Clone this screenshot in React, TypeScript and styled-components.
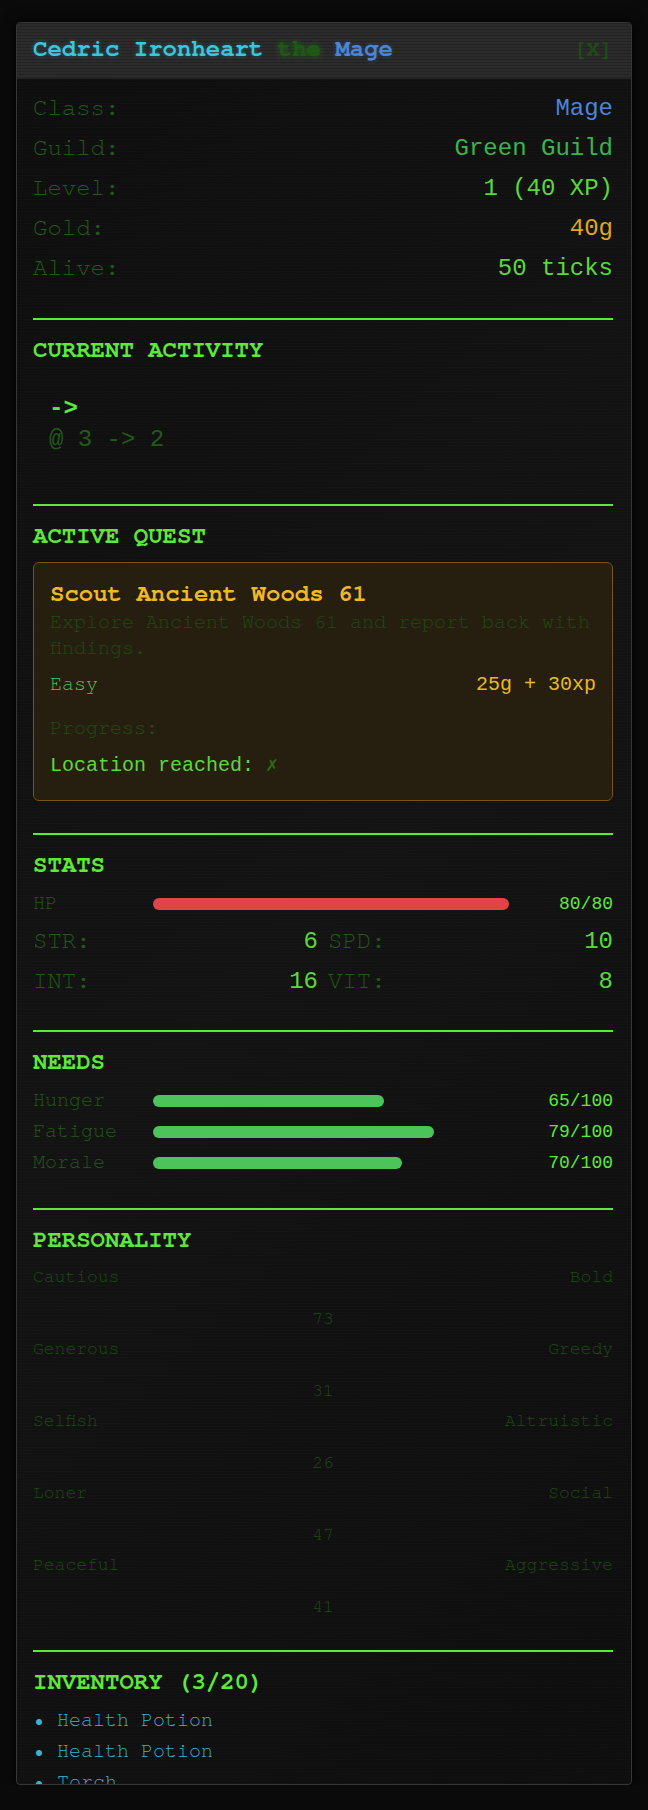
import React from 'react';
import styled, { createGlobalStyle } from 'styled-components';

const SLAB =
  "'Courier 10 Pitch', 'Nimbus Mono PS', 'Nimbus Mono', 'TeX Gyre Cursor', 'FreeMono', 'Courier', 'Courier New', 'Liberation Mono', monospace";
const SANS = "'Liberation Mono', 'DejaVu Sans Mono', monospace";

const C = {
  bright: '#5ee83c',
  value: '#5ad83a',
  green: '#3cb44a',
  dim: '#235a18',
  dimmer: '#1d4a15',
  cyan: '#3cc6de',
  blue: '#4a86d8',
  gold: '#e0a81c',
  red: '#e04545',
  need: '#4cc45a',
};

const GlobalStyle = createGlobalStyle`
  html, body {
    margin: 0;
    padding: 0;
    background: #0a0a0a;
  }
  body {
    font-family: ${SLAB};
  }
`;

const info = [
  { label: 'Class:', value: 'Mage', color: C.blue },
  { label: 'Guild:', value: 'Green Guild', color: C.green },
  { label: 'Level:', value: '1 (40 XP)', color: C.value },
  { label: 'Gold:', value: '40g', color: C.gold },
  { label: 'Alive:', value: '50 ticks', color: C.value },
];

const needs = [
  { label: 'Hunger', value: 65 },
  { label: 'Fatigue', value: 79 },
  { label: 'Morale', value: 70 },
];

const traits = [
  { low: 'Cautious', high: 'Bold', value: 73 },
  { low: 'Generous', high: 'Greedy', value: 31 },
  { low: 'Selfish', high: 'Altruistic', value: 26 },
  { low: 'Loner', high: 'Social', value: 47 },
  { low: 'Peaceful', high: 'Aggressive', value: 41 },
];

const inventory = ['Health Potion', 'Health Potion', 'Torch'];

export default function App() {
  return (
    <>
      <GlobalStyle />
      <Page>
        <Panel>
          <Header>
            <Name>
              <Hero>Cedric Ironheart</Hero> <The>the</The> <ClassName>Mage</ClassName>
            </Name>
            <Close>[X]</Close>
          </Header>
          <Body>
            <InfoList>
              {info.map((row) => (
                <InfoRow key={row.label}>
                  <Label>{row.label}</Label>
                  <Value $color={row.color}>{row.value}</Value>
                </InfoRow>
              ))}
            </InfoList>

            <Section $gap={30}>
              <SectionTitle>CURRENT ACTIVITY</SectionTitle>
              <ActivityBox>
                <Arrow>-&gt;</Arrow>
                <Location>@ 3 -&gt; 2</Location>
              </ActivityBox>
            </Section>

            <Section $gap={38}>
              <SectionTitle $after={13}>ACTIVE QUEST</SectionTitle>
              <QuestCard>
                <QuestTitle>Scout Ancient Woods 61</QuestTitle>
                <QuestDesc>Explore Ancient Woods 61 and report back with findings.</QuestDesc>
                <QuestMeta>
                  <Difficulty>Easy</Difficulty>
                  <Reward>25g + 30xp</Reward>
                </QuestMeta>
                <Progress>Progress:</Progress>
                <Objective>
                  Location reached: <Cross>✗</Cross>
                </Objective>
              </QuestCard>
            </Section>

            <Section $gap={32}>
              <SectionTitle $after={12}>STATS</SectionTitle>
              <BarRow>
                <BarLabel>HP</BarLabel>
                <Track>
                  <Fill $color={C.red} style={{ width: '100%' }} />
                </Track>
                <BarValue>80/80</BarValue>
              </BarRow>
              <StatGrid>
                <StatCell>
                  <Label>STR:</Label>
                  <Value $color={C.value}>6</Value>
                </StatCell>
                <StatCell>
                  <Label>SPD:</Label>
                  <Value $color={C.value}>10</Value>
                </StatCell>
                <StatCell>
                  <Label>INT:</Label>
                  <Value $color={C.value}>16</Value>
                </StatCell>
                <StatCell>
                  <Label>VIT:</Label>
                  <Value $color={C.value}>8</Value>
                </StatCell>
              </StatGrid>
            </Section>

            <Section $gap={29}>
              <SectionTitle $after={12}>NEEDS</SectionTitle>
              <NeedList>
                {needs.map((n) => (
                  <BarRow key={n.label}>
                    <BarLabel>{n.label}</BarLabel>
                    <Track>
                      <Fill $color={C.need} style={{ width: `${n.value}%` }} />
                    </Track>
                    <BarValue>{n.value}/100</BarValue>
                  </BarRow>
                ))}
              </NeedList>
            </Section>

            <Section $gap={37}>
              <SectionTitle $after={13}>PERSONALITY</SectionTitle>
              <TraitList>
                {traits.map((t) => (
                  <Trait key={t.low}>
                    <TraitEnds>
                      <span>{t.low}</span>
                      <span>{t.high}</span>
                    </TraitEnds>
                    <TraitValue>{t.value}</TraitValue>
                  </Trait>
                ))}
              </TraitList>
            </Section>

            <Section $gap={34}>
              <SectionTitle $after={9}>INVENTORY (3/20)</SectionTitle>
              {inventory.map((item, i) => (
                <Item key={i}>• {item}</Item>
              ))}
            </Section>
          </Body>
        </Panel>
      </Page>
    </>
  );
}

const Page = styled.div`
  padding: 22px 16px 0;
`;

const Panel = styled.div`
  height: 1761px;
  overflow: hidden;
  border: 1px solid #363636;
  border-radius: 4px;
  background:
    repeating-linear-gradient(0deg, rgba(255, 255, 255, 0.012) 0 1px, transparent 1px 3px),
    linear-gradient(135deg, #0e0e0e 0%, #131313 50%, #111111 65%, #0e0e0e 100%);
  box-shadow: 0 0 14px rgba(0, 0, 0, 0.9);
`;

const Header = styled.div`
  box-sizing: border-box;
  height: 56px;
  padding: 0 18px 8px 16px;
  display: flex;
  align-items: center;
  justify-content: space-between;
  background:
    repeating-linear-gradient(0deg, rgba(0, 0, 0, 0.18) 0 1px, transparent 1px 3px),
    #2b2b2b;
  border-bottom: 1px solid #222;
`;

const Name = styled.div`
  font-family: ${SLAB};
  font-weight: bold;
  font-size: 24px;
  white-space: pre;
`;

const Hero = styled.span`
  color: ${C.cyan};
  text-shadow: 0 0 4px rgba(60, 198, 222, 0.35);
`;

const The = styled.span`
  color: #1d5a14;
  text-shadow: 0 0 6px rgba(40, 140, 30, 0.7);
`;

const ClassName = styled.span`
  color: ${C.blue};
  text-shadow: 0 0 4px rgba(74, 134, 216, 0.35);
`;

const Close = styled.span`
  font-family: ${SLAB};
  font-weight: bold;
  font-size: 22px;
  color: #1d4d14;
`;

const Body = styled.div`
  padding: 9px 18px 0 16px;
`;

const InfoList = styled.div`
  display: flex;
  flex-direction: column;
`;

const InfoRow = styled.div`
  height: 40px;
  display: flex;
  align-items: center;
  justify-content: space-between;
`;

const Label = styled.span`
  font-family: ${SLAB};
  font-size: 24px;
  margin-bottom: 4px;
  color: ${C.dim};
`;

const Value = styled.span<{ $color: string }>`
  font-family: ${SANS};
  font-size: 24px;
  color: ${(p) => p.$color};
`;

const Section = styled.section<{ $gap: number }>`
  margin-top: ${(p) => p.$gap}px;
  padding-top: 13px;
  border-top: 2px solid ${C.bright};
`;

const SectionTitle = styled.h3<{ $after?: number }>`
  margin: 0 0 ${(p) => p.$after ?? 15}px;
  font-family: ${SLAB};
  font-weight: bold;
  font-size: 24px;
  line-height: 30px;
  color: ${C.bright};
`;

const ActivityBox = styled.div`
  padding: 15px 16px 12px;
  font-family: ${SANS};
  font-size: 24px;
`;

const Arrow = styled.div`
  font-weight: bold;
  line-height: 32px;
  color: ${C.bright};
`;

const Location = styled.div`
  line-height: 29px;
  color: ${C.dim};
`;

const QuestCard = styled.div`
  padding: 14px 16px 21px;
  border: 1px solid #7a5414;
  border-radius: 6px;
  background: #261f10;
`;

const QuestTitle = styled.div`
  font-family: ${SLAB};
  font-weight: bold;
  font-size: 24px;
  line-height: 30px;
  color: #f0b828;
`;

const QuestDesc = styled.div`
  margin-top: 1px;
  font-family: ${SLAB};
  font-size: 20px;
  line-height: 26px;
  color: #214a12;
`;

const QuestMeta = styled.div`
  margin-top: 10px;
  display: flex;
  justify-content: space-between;
  align-items: baseline;
  font-size: 20px;
  line-height: 26px;
`;

const Difficulty = styled.span`
  font-family: ${SLAB};
  color: ${C.need};
`;

const Reward = styled.span`
  font-family: ${SANS};
  color: #e8b820;
`;

const Progress = styled.div`
  margin-top: 16px;
  font-family: ${SLAB};
  font-size: 20px;
  line-height: 26px;
  color: #244c14;
`;

const Objective = styled.div`
  margin-top: 13px;
  font-family: ${SANS};
  font-size: 20px;
  line-height: 26px;
  color: ${C.value};
`;

const Cross = styled.span`
  color: #2a6a18;
`;

const BarRow = styled.div`
  height: 22px;
  display: grid;
  grid-template-columns: 120px 1fr 104px;
  align-items: center;
`;

const BarLabel = styled.span`
  margin-bottom: 4px;
  font-family: ${SLAB};
  font-size: 20px;
  color: ${C.dim};
`;

const Track = styled.div`
  height: 12px;
  border-radius: 6px;
  background: transparent;
`;

const Fill = styled.div<{ $color: string }>`
  height: 100%;
  border-radius: 6px;
  background: ${(p) => p.$color};
`;

const BarValue = styled.span`
  font-family: ${SANS};
  font-size: 18px;
  text-align: right;
  color: ${C.bright};
`;

const StatGrid = styled.div`
  margin-top: 9px;
  display: grid;
  grid-template-columns: 1fr 1fr;
  column-gap: 10px;
`;

const StatCell = styled.div`
  height: 40px;
  display: flex;
  align-items: center;
  justify-content: space-between;
`;

const NeedList = styled.div`
  display: flex;
  flex-direction: column;
  gap: 9px;
`;

const TraitList = styled.div`
  display: flex;
  flex-direction: column;
  gap: 10px;
`;

const Trait = styled.div`
  display: flex;
  flex-direction: column;
  gap: 22px;
`;

const TraitEnds = styled.div`
  display: flex;
  justify-content: space-between;
  font-family: ${SLAB};
  font-size: 18px;
  line-height: 20px;
  color: ${C.dimmer};
`;

const TraitValue = styled.div`
  text-align: center;
  font-family: ${SLAB};
  font-size: 18px;
  line-height: 20px;
  color: ${C.dimmer};
`;

const Item = styled.div`
  font-family: ${SLAB};
  font-size: 20px;
  line-height: 31px;
  color: #3ab4cc;
`;
